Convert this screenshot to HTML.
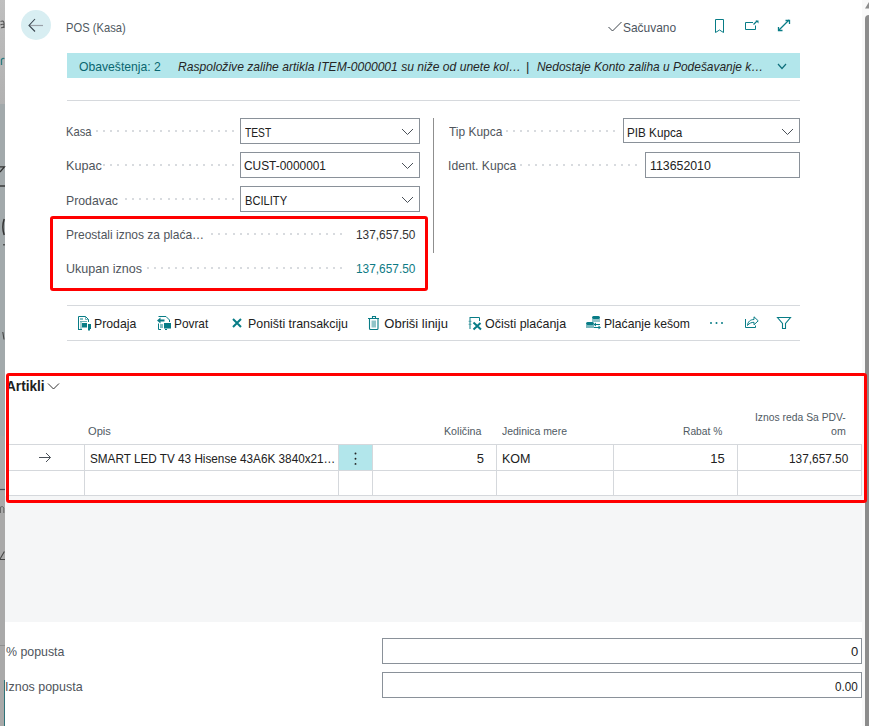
<!DOCTYPE html>
<html><head><meta charset="utf-8">
<style>
*{margin:0;padding:0;box-sizing:border-box}
html,body{width:869px;height:726px;overflow:hidden;background:#fff;font-family:"Liberation Sans",sans-serif;color:#212121}
.a{position:absolute;white-space:nowrap}
.lbl{font-size:12px;color:#4d5258;line-height:14px}
.val{font-size:12px;color:#212121;line-height:14px}
.hd{font-size:10.3px;color:#505a63;line-height:12px}
.box{position:absolute;border:1px solid #8a9199;background:#fff}
.hl{position:absolute;height:1px;background:#d5d8dc}
.vl{position:absolute;width:1px;background:#d5d8dc}
.red{position:absolute;border:3px solid #ff0000;border-radius:3px}
svg{position:absolute;overflow:visible}
</style></head><body>
<!-- left strip -->
<div class="a" style="left:0;top:0;width:5px;height:104px;background:linear-gradient(#bfbfbf,#b1b1b1)"></div>
<div class="a" style="left:0;top:104px;width:5px;height:332px;background:#a2a9ab"></div>
<div class="a" style="left:0;top:436px;width:5px;height:290px;background:#a9a9a9"></div>
<!-- scrollbar -->
<div class="a" style="left:862px;top:0;width:7px;height:726px;background:#f9f9f9"></div>
<div class="a" style="left:865px;top:15px;width:8px;height:720px;background:#8c8c8c;border-radius:4px 0 0 0"></div>

<!-- header -->
<div class="a" style="left:21px;top:10px;width:30px;height:30px;border-radius:50%;background:#d8eef2"></div>

<!-- notification bar -->
<div class="a" style="left:67px;top:53px;width:733px;height:25px;background:#b2e6eb"></div>

<div class="hl" style="left:67px;top:100px;width:733px;background:#d6d9dd"></div>

<!-- fields left -->
<div class="box" style="left:240px;top:118px;width:180px;height:26px"></div>

<div class="box" style="left:240px;top:152px;width:180px;height:26px"></div>

<div class="box" style="left:240px;top:186px;width:180px;height:26px"></div>


<div class="vl" style="left:433px;top:118px;height:135px;background:#8f8f8f"></div>

<!-- fields right -->
<div class="box" style="left:623px;top:118px;width:177px;height:25px"></div>
<div class="box" style="left:645px;top:152px;width:155px;height:26px"></div>


<!-- action bar -->
<div class="hl" style="left:67px;top:305px;width:733px;background:#d6d9dd"></div>
<div class="hl" style="left:67px;top:340px;width:733px;background:#d6d9dd"></div>

<!-- section Artikli -->
<div class="a" style="left:5px;top:496px;width:857px;height:126px;background:#f5f6f7"></div>

<div class="hl" style="left:9px;top:444px;width:853px"></div>
<div class="hl" style="left:9px;top:470px;width:853px"></div>
<div class="hl" style="left:9px;top:495px;width:853px"></div>
<div class="a" style="left:339px;top:445px;width:33px;height:25px;background:#b2e6eb"></div>
<div class="vl" style="left:84px;top:444px;height:52px"></div>
<div class="vl" style="left:338px;top:444px;height:52px"></div>
<div class="vl" style="left:372px;top:444px;height:52px"></div>
<div class="vl" style="left:496px;top:444px;height:52px"></div>
<div class="vl" style="left:613px;top:444px;height:52px"></div>
<div class="vl" style="left:737px;top:444px;height:52px"></div>
<div class="vl" style="left:861px;top:444px;height:52px"></div>




<!-- bottom fields -->
<div class="box" style="left:382px;top:638px;width:480px;height:26px"></div>
<div class="box" style="left:382px;top:672px;width:480px;height:26px"></div>

<!-- texts -->
<div class="a" style="left:66.14px;top:18px;font-size:13px;line-height:20px;color:#505a63;transform:scaleX(0.8603);transform-origin:0 0;">POS (Kasa)</div>
<div class="a" style="left:623.08px;top:18px;font-size:13px;line-height:20px;color:#4d5560;transform:scaleX(0.9196);transform-origin:0 0;">Sačuvano</div>
<div class="a" style="left:79.06px;top:57px;font-size:13px;line-height:20px;color:#0a6670;transform:scaleX(0.9360);transform-origin:0 0;">Obaveštenja: 2</div>
<div class="a" style="left:177.50px;top:57px;font-size:13px;line-height:20px;color:#262626;transform:scaleX(0.9303);transform-origin:0 0;font-style:italic;">Raspoložive zalihe artikla ITEM-0000001 su niže od unete kol…</div>
<div class="a" style="left:526.00px;top:57px;font-size:13px;line-height:20px;color:#262626;">|</div>
<div class="a" style="left:537.00px;top:57px;font-size:13px;line-height:20px;color:#262626;transform:scaleX(0.9180);transform-origin:0 0;font-style:italic;">Nedostaje Konto zaliha u Podešavanje k…</div>
<div class="a" style="left:66.14px;top:122px;font-size:13px;line-height:20px;color:#4f555c;transform:scaleX(0.8621);transform-origin:0 0;">Kasa</div>
<div class="a" style="left:245.00px;top:123px;font-size:13px;line-height:20px;color:#212121;transform:scaleX(0.7879);transform-origin:0 0;">TEST</div>
<div class="a" style="left:66.03px;top:156px;font-size:13px;line-height:20px;color:#4f555c;transform:scaleX(0.9714);transform-origin:0 0;">Kupac</div>
<div class="a" style="left:244.29px;top:156px;font-size:13px;line-height:20px;color:#212121;transform:scaleX(0.9148);transform-origin:0 0;">CUST-0000001</div>
<div class="a" style="left:66.06px;top:191px;font-size:13px;line-height:20px;color:#4f555c;transform:scaleX(0.9444);transform-origin:0 0;">Prodavac</div>
<div class="a" style="left:244.64px;top:191px;font-size:13px;line-height:20px;color:#212121;transform:scaleX(0.8563);transform-origin:0 0;">BCILITY</div>
<div class="a" style="left:66.28px;top:225px;font-size:13px;line-height:20px;color:#4f555c;transform:scaleX(0.9231);transform-origin:0 0;">Preostali iznos za plaća…</div>
<div class="a" style="left:355.69px;top:225px;font-size:13px;line-height:20px;color:#333333;transform:scaleX(0.9125);transform-origin:0 0;">137,657.50</div>
<div class="a" style="left:66.24px;top:259px;font-size:13px;line-height:20px;color:#4f555c;transform:scaleX(0.9636);transform-origin:0 0;">Ukupan iznos</div>
<div class="a" style="left:355.69px;top:259px;font-size:13px;line-height:20px;color:#0d7a84;transform:scaleX(0.9125);transform-origin:0 0;">137,657.50</div>
<div class="a" style="left:448.70px;top:122px;font-size:13px;line-height:20px;color:#4f555c;transform:scaleX(0.9190);transform-origin:0 0;">Tip Kupca</div>
<div class="a" style="left:627.20px;top:123px;font-size:13px;line-height:20px;color:#212121;transform:scaleX(0.9000);transform-origin:0 0;">PIB Kupca</div>
<div class="a" style="left:447.77px;top:156px;font-size:13px;line-height:20px;color:#4f555c;transform:scaleX(0.9347);transform-origin:0 0;">Ident. Kupca</div>
<div class="a" style="left:650.15px;top:156px;font-size:13px;line-height:20px;color:#212121;transform:scaleX(0.9492);transform-origin:0 0;">113652010</div>
<div class="a" style="left:93.86px;top:314px;font-size:13px;line-height:20px;color:#212121;transform:scaleX(0.9432);transform-origin:0 0;">Prodaja</div>
<div class="a" style="left:174.49px;top:314px;font-size:13px;line-height:20px;color:#212121;transform:scaleX(0.9108);transform-origin:0 0;">Povrat</div>
<div class="a" style="left:247.95px;top:314px;font-size:13px;line-height:20px;color:#212121;transform:scaleX(0.9524);transform-origin:0 0;">Poništi transakciju</div>
<div class="a" style="left:384.30px;top:314px;font-size:13px;line-height:20px;color:#212121;">Obriši liniju</div>
<div class="a" style="left:485.04px;top:314px;font-size:13px;line-height:20px;color:#212121;transform:scaleX(0.9590);transform-origin:0 0;">Očisti plaćanja</div>
<div class="a" style="left:603.76px;top:314px;font-size:13px;line-height:20px;color:#212121;transform:scaleX(0.9367);transform-origin:0 0;">Plaćanje kešom</div>
<div class="a" style="left:6.00px;top:376px;font-size:14px;line-height:20px;color:#212121;transform:scaleX(0.9744);transform-origin:0 0;font-weight:bold;">Artikli</div>
<div class="a" style="left:88.23px;top:421px;font-size:11.5px;line-height:20px;color:#505a63;transform:scaleX(0.9682);transform-origin:0 0;">Opis</div>
<div class="a" style="left:444.47px;top:421px;font-size:11.5px;line-height:20px;color:#505a63;transform:scaleX(0.9282);transform-origin:0 0;">Količina</div>
<div class="a" style="left:501.90px;top:421px;font-size:11.5px;line-height:20px;color:#505a63;transform:scaleX(0.9070);transform-origin:0 0;">Jedinica mere</div>
<div class="a" style="left:682.81px;top:421px;font-size:11.5px;line-height:20px;color:#505a63;transform:scaleX(0.8907);transform-origin:0 0;">Rabat %</div>
<div class="a" style="left:755.40px;top:407px;font-size:11.5px;line-height:20px;color:#505a63;transform:scaleX(0.8990);transform-origin:0 0;">Iznos reda Sa PDV-</div>
<div class="a" style="left:831.00px;top:421px;font-size:11.5px;line-height:20px;color:#505a63;transform:scaleX(0.9250);transform-origin:0 0;">om</div>
<div class="a" style="left:89.50px;top:449px;font-size:13px;line-height:20px;color:#212121;transform:scaleX(0.9030);transform-origin:0 0;">SMART LED TV 43 Hisense 43A6K 3840x21…</div>
<div class="a" style="left:476.70px;top:449px;font-size:13px;line-height:20px;color:#212121;">5</div>
<div class="a" style="left:502.04px;top:449px;font-size:13px;line-height:20px;color:#212121;transform:scaleX(0.9643);transform-origin:0 0;">KOM</div>
<div class="a" style="left:710.30px;top:449px;font-size:13px;line-height:20px;color:#212121;">15</div>
<div class="a" style="left:788.79px;top:449px;font-size:13px;line-height:20px;color:#212121;transform:scaleX(0.9109);transform-origin:0 0;">137,657.50</div>
<div class="a" style="left:6.20px;top:642px;font-size:13px;line-height:20px;color:#4f555c;transform:scaleX(0.9508);transform-origin:0 0;">% popusta</div>
<div class="a" style="left:851.00px;top:642px;font-size:13px;line-height:20px;color:#212121;">0</div>
<div class="a" style="left:5.24px;top:677px;font-size:13px;line-height:20px;color:#4f555c;transform:scaleX(0.9587);transform-origin:0 0;">Iznos popusta</div>
<div class="a" style="left:834.50px;top:677px;font-size:13px;line-height:20px;color:#212121;transform:scaleX(0.9000);transform-origin:0 0;">0.00</div>
<!-- overlay svg: dots + icons -->
<svg style="left:0;top:0" width="869" height="726" viewBox="0 0 869 726">
<g fill="#d8dbdf"><rect x="232" y="130" width="2" height="2"/><rect x="225" y="130" width="2" height="2"/><rect x="218" y="130" width="2" height="2"/><rect x="211" y="130" width="2" height="2"/><rect x="203" y="130" width="2" height="2"/><rect x="196" y="130" width="2" height="2"/><rect x="189" y="130" width="2" height="2"/><rect x="182" y="130" width="2" height="2"/><rect x="175" y="130" width="2" height="2"/><rect x="168" y="130" width="2" height="2"/><rect x="160" y="130" width="2" height="2"/><rect x="153" y="130" width="2" height="2"/><rect x="146" y="130" width="2" height="2"/><rect x="139" y="130" width="2" height="2"/><rect x="132" y="130" width="2" height="2"/><rect x="125" y="130" width="2" height="2"/><rect x="117" y="130" width="2" height="2"/><rect x="110" y="130" width="2" height="2"/><rect x="103" y="130" width="2" height="2"/><rect x="96" y="130" width="2" height="2"/><rect x="232" y="164" width="2" height="2"/><rect x="225" y="164" width="2" height="2"/><rect x="218" y="164" width="2" height="2"/><rect x="211" y="164" width="2" height="2"/><rect x="203" y="164" width="2" height="2"/><rect x="196" y="164" width="2" height="2"/><rect x="189" y="164" width="2" height="2"/><rect x="182" y="164" width="2" height="2"/><rect x="175" y="164" width="2" height="2"/><rect x="168" y="164" width="2" height="2"/><rect x="160" y="164" width="2" height="2"/><rect x="153" y="164" width="2" height="2"/><rect x="146" y="164" width="2" height="2"/><rect x="139" y="164" width="2" height="2"/><rect x="132" y="164" width="2" height="2"/><rect x="125" y="164" width="2" height="2"/><rect x="117" y="164" width="2" height="2"/><rect x="110" y="164" width="2" height="2"/><rect x="103" y="164" width="2" height="2"/><rect x="232" y="198" width="2" height="2"/><rect x="225" y="198" width="2" height="2"/><rect x="218" y="198" width="2" height="2"/><rect x="211" y="198" width="2" height="2"/><rect x="203" y="198" width="2" height="2"/><rect x="196" y="198" width="2" height="2"/><rect x="189" y="198" width="2" height="2"/><rect x="182" y="198" width="2" height="2"/><rect x="175" y="198" width="2" height="2"/><rect x="168" y="198" width="2" height="2"/><rect x="160" y="198" width="2" height="2"/><rect x="153" y="198" width="2" height="2"/><rect x="146" y="198" width="2" height="2"/><rect x="139" y="198" width="2" height="2"/><rect x="132" y="198" width="2" height="2"/><rect x="125" y="198" width="2" height="2"/><rect x="340" y="233" width="2" height="2"/><rect x="333" y="233" width="2" height="2"/><rect x="326" y="233" width="2" height="2"/><rect x="319" y="233" width="2" height="2"/><rect x="311" y="233" width="2" height="2"/><rect x="304" y="233" width="2" height="2"/><rect x="297" y="233" width="2" height="2"/><rect x="290" y="233" width="2" height="2"/><rect x="283" y="233" width="2" height="2"/><rect x="276" y="233" width="2" height="2"/><rect x="268" y="233" width="2" height="2"/><rect x="261" y="233" width="2" height="2"/><rect x="254" y="233" width="2" height="2"/><rect x="247" y="233" width="2" height="2"/><rect x="240" y="233" width="2" height="2"/><rect x="233" y="233" width="2" height="2"/><rect x="225" y="233" width="2" height="2"/><rect x="218" y="233" width="2" height="2"/><rect x="211" y="233" width="2" height="2"/><rect x="340" y="267" width="2" height="2"/><rect x="333" y="267" width="2" height="2"/><rect x="326" y="267" width="2" height="2"/><rect x="319" y="267" width="2" height="2"/><rect x="311" y="267" width="2" height="2"/><rect x="304" y="267" width="2" height="2"/><rect x="297" y="267" width="2" height="2"/><rect x="290" y="267" width="2" height="2"/><rect x="283" y="267" width="2" height="2"/><rect x="276" y="267" width="2" height="2"/><rect x="268" y="267" width="2" height="2"/><rect x="261" y="267" width="2" height="2"/><rect x="254" y="267" width="2" height="2"/><rect x="247" y="267" width="2" height="2"/><rect x="240" y="267" width="2" height="2"/><rect x="233" y="267" width="2" height="2"/><rect x="225" y="267" width="2" height="2"/><rect x="218" y="267" width="2" height="2"/><rect x="211" y="267" width="2" height="2"/><rect x="204" y="267" width="2" height="2"/><rect x="197" y="267" width="2" height="2"/><rect x="190" y="267" width="2" height="2"/><rect x="182" y="267" width="2" height="2"/><rect x="175" y="267" width="2" height="2"/><rect x="168" y="267" width="2" height="2"/><rect x="161" y="267" width="2" height="2"/><rect x="154" y="267" width="2" height="2"/><rect x="147" y="267" width="2" height="2"/><rect x="613" y="130" width="2" height="2"/><rect x="606" y="130" width="2" height="2"/><rect x="599" y="130" width="2" height="2"/><rect x="592" y="130" width="2" height="2"/><rect x="584" y="130" width="2" height="2"/><rect x="577" y="130" width="2" height="2"/><rect x="570" y="130" width="2" height="2"/><rect x="563" y="130" width="2" height="2"/><rect x="556" y="130" width="2" height="2"/><rect x="549" y="130" width="2" height="2"/><rect x="541" y="130" width="2" height="2"/><rect x="534" y="130" width="2" height="2"/><rect x="527" y="130" width="2" height="2"/><rect x="520" y="130" width="2" height="2"/><rect x="513" y="130" width="2" height="2"/><rect x="506" y="130" width="2" height="2"/><rect x="635" y="164" width="2" height="2"/><rect x="628" y="164" width="2" height="2"/><rect x="621" y="164" width="2" height="2"/><rect x="614" y="164" width="2" height="2"/><rect x="606" y="164" width="2" height="2"/><rect x="599" y="164" width="2" height="2"/><rect x="592" y="164" width="2" height="2"/><rect x="585" y="164" width="2" height="2"/><rect x="578" y="164" width="2" height="2"/><rect x="571" y="164" width="2" height="2"/><rect x="563" y="164" width="2" height="2"/><rect x="556" y="164" width="2" height="2"/><rect x="549" y="164" width="2" height="2"/><rect x="542" y="164" width="2" height="2"/><rect x="535" y="164" width="2" height="2"/><rect x="528" y="164" width="2" height="2"/><rect x="520" y="164" width="2" height="2"/></g>
<!-- strip marks -->
<g fill="none">
<path d="M0.5 21.5 Q3.5 20 4 23 L4 28 M0.5 25 Q2 23.8 4 24.6 M1 27.6 Q2.5 28 4 26.8" stroke="#555" stroke-width="1.1"/>
<path d="M1.5 65 L1.5 59.5 Q2.8 58 4.4 58.6" stroke="#2c7b80" stroke-width="1.3"/>
<path d="M0 166.8 L4.4 166.8 L0 172" stroke="#333" stroke-width="1.3"/>
<path d="M0 186 L5 186" stroke="#333" stroke-width="1.4"/>
<path d="M4.2 219 Q1.5 227 4.2 235" stroke="#333" stroke-width="1.5"/>
<path d="M4 244 L4 245.5" stroke="#333" stroke-width="1.4"/>
<path d="M2.8 332 L4 339.5" stroke="#444" stroke-width="1.1"/>
<path d="M0 489.5 L5 489.5" stroke="#4a4f55" stroke-width="1.2"/>
<path d="M0.5 513 L0.5 507 Q3 505.5 3.8 508 L3.8 513" stroke="#666" stroke-width="1"/>
<path d="M0 559 L4.4 551.5 M0 559.5 L5 559.5" stroke="#444" stroke-width="1.1"/>
<path d="M0 645.5 L5 645.5" stroke="#8f8f8f" stroke-width="1"/>
<rect x="4" y="680" width="1" height="46" fill="#2f7378"/>
</g>
<!-- scrollbar arrow -->
<path d="M865 8.5 L869 2 L869 8.5 Z" fill="#8c8c8c"/>
<!-- back arrow -->
<path d="M29.5 25.5 L43 25.5" stroke="#9aa1a8" stroke-width="1.2" fill="none"/>
<path d="M35 19 L29 25.5 L35 31.5" stroke="#3a4650" stroke-width="1.1" fill="none"/>
<!-- check -->
<path d="M608.5 27 L612.5 31 L621.5 22" stroke="#3d444c" stroke-width="1" fill="none"/>
<!-- bookmark -->
<path d="M715.5 32.5 L715.5 19.5 L723.5 19.5 L723.5 32.5 L719.5 30 Z" stroke="#087c86" stroke-width="1" fill="none"/>
<!-- open in new -->
<path d="M753 22.5 L745.5 22.5 L745.5 29.5 L755.5 29.5 L755.5 25.5" stroke="#087c86" stroke-width="1" fill="none"/>
<path d="M753.5 24.5 L757 21" stroke="#087c86" stroke-width="1.2" fill="none"/>
<path d="M755.5 20.5 L758.5 20.5 L758.5 23.5 Z" fill="#087c86"/>
<!-- expand -->
<path d="M779 30 L789 20" stroke="#087c86" stroke-width="1.2" fill="none"/>
<path d="M778.5 27 L778.5 30.5 L782.5 30.5 M785.5 20.5 L789.5 20.5 L789.5 24" stroke="#087c86" stroke-width="1.3" fill="none"/>
<!-- notif chevron -->
<path d="M778 64 L782 68.5 L786 64" stroke="#0f6f7c" stroke-width="1.2" fill="none"/>
<!-- dropdown chevrons -->
<g stroke="#4a5058" stroke-width="1" fill="none">
<path d="M402 129 L407.5 134.5 L413 129"/>
<path d="M402 163 L407.5 168.5 L413 163"/>
<path d="M402 197 L407.5 202.5 L413 197"/>
<path d="M782 129 L787.5 134.5 L793 129"/>
<path d="M48 383.5 L53.5 389 L59 383.5" stroke="#333"/>
<!-- row arrow -->
<path d="M39 457.5 L50.5 457.5 M46 453 L50.5 457.5 L46 462"/>
</g>
<!-- vertical ellipsis -->
<g fill="#222"><circle cx="355.5" cy="453.5" r="0.95"/><circle cx="355.5" cy="458.7" r="0.95"/><circle cx="355.5" cy="463.9" r="0.95"/></g>
<!-- action icons -->
<g fill="#087c86" stroke="none">
<!-- prodaja -->
<path d="M78.5 330 L78.5 316.5 L85.5 316.5 L88.5 319.5 L88.5 322" stroke="#087c86" stroke-width="1" fill="none"/>
<path d="M85.5 316.5 L85.5 319.5 L88.5 319.5" stroke="#087c86" stroke-width="0.8" fill="none" opacity=".7"/>
<rect x="80" y="318" width="3" height="2" opacity=".5"/>
<rect x="80" y="321" width="7" height="1" opacity=".6"/>
<rect x="80" y="322" width="2" height="7" opacity=".35"/>
<rect x="82" y="323" width="5" height="4.5"/>
<rect x="88" y="324" width="3" height="5"/>
<rect x="79" y="329" width="3" height="1"/>
<rect x="88" y="329" width="2" height="1.5"/>
<!-- povrat -->
<path d="M158.5 316.5 L166 316.5 L169.5 320 L169.5 322" stroke="#087c86" stroke-width="1" fill="none"/>
<path d="M157 320.5 L160.5 317.5 L160.5 319.5 L164.5 319.5 L164.5 321.5 L160.5 321.5 L160.5 323.5 Z"/>
<path d="M158.5 323.5 L158.5 329.5 L161 329.5" stroke="#087c86" stroke-width="1" fill="none"/>
<rect x="160" y="324" width="3" height="4" opacity=".5"/>
<rect x="164" y="323" width="7" height="5.5"/>
<rect x="165" y="329" width="2" height="1"/>
<!-- X -->
<path d="M233 319 L241 327 M241 319 L233 327" stroke="#087c86" stroke-width="2" fill="none"/>
<!-- trash -->
<path d="M368 318.5 L379 318.5 M372.5 318 L372.5 316.5 L375.5 316.5 L375.5 318 M369.5 318.5 L369.5 328.5 Q369.5 329.5 370.5 329.5 L377 329.5 Q378 329.5 378 328.5 L378 318.5" stroke="#087c86" stroke-width="1.1" fill="none"/>
<rect x="371.5" y="320.5" width="4.5" height="7" opacity=".45"/>
<!-- clear payments -->
<path d="M469.5 317.5 L479.5 317.5 L479.5 321" stroke="#087c86" stroke-width="1" fill="none"/>
<path d="M470 318 L470 329" stroke="#087c86" stroke-width="1.3" fill="none" opacity=".75"/><path d="M468.5 321.3 L471.5 321.3 M468.5 324.3 L471.5 324.3" stroke="#087c86" stroke-width="1" fill="none" opacity=".5"/>
<path d="M473.5 322.5 L481 329.5 M480.5 323 L473.5 329.5" stroke="#087c86" stroke-width="2" fill="none"/>
<!-- cash -->
<rect x="592" y="316" width="8" height="3" rx="1.5"/>
<rect x="592" y="319" width="8" height="3" opacity=".45"/>
<rect x="586" y="322" width="8" height="3" rx="1.5"/>
<rect x="586" y="325" width="8" height="3" opacity=".55"/>
<path d="M594 324.5 L600 324.5 M594 327.5 L599 327.5" stroke="#087c86" stroke-width="1.1" fill="none"/>
<path d="M593.5 324.5 L596 322.5 L596 326.5 Z M601 327.5 L598.5 325.5 L598.5 329.5 Z"/>
<!-- more dots -->
<circle cx="711" cy="323" r="1"/><circle cx="716.5" cy="323" r="1"/><circle cx="722" cy="323" r="1"/>
<!-- share -->
<path d="M745.5 319 L745.5 327.5 L755.5 327.5 L755.5 325.5" stroke="#087c86" stroke-width="1" fill="none"/>
<path d="M747.5 325.5 C747.8 321.5 750.5 319.5 754 319.5 L754 316.8 L758.2 320.8 L754 324.8 L754 322.3 C751.5 322.3 749.2 323.2 747.5 325.5 Z" stroke="#087c86" stroke-width="1" fill="none"/>
<!-- filter -->
<path d="M777.5 317.5 L790.5 317.5 L785.5 323.5 L785.5 328.5 L782.5 328.5 L782.5 323.5 Z" stroke="#087c86" stroke-width="1.1" fill="none"/>
</g>
</svg>
<div class="red" style="left:50px;top:216px;width:378px;height:75px"></div>
<div class="red" style="left:6px;top:373px;width:861px;height:130px"></div>
</body></html>
